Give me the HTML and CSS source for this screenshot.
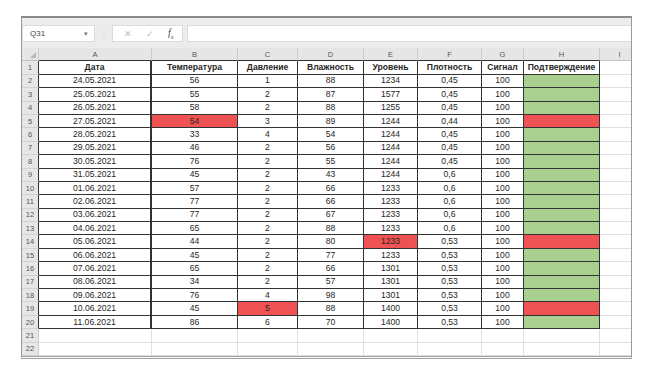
FILE: index.html
```html
<!DOCTYPE html>
<html lang="ru">
<head>
    <meta charset="UTF-8">
    <meta name="viewport" content="width=device-width, initial-scale=1.0">
    <title>Таблица измерений</title>
    <link rel="stylesheet" href="styles.css">
</head>
<body>
    <div class="sheet">
        <div class="top-strip"></div>

        <!-- Строка формул -->
        <div class="formula-bar">
            <div class="name-box">
                <span>Q31</span>
                <span class="name-arrow">▾</span>
            </div>
            <span class="bar-dots">⋮</span>
            <div class="fx-box">
                <span class="fx-cancel">✕</span>
                <span class="fx-ok">✓</span>
                <span class="fx-label">f<sub>x</sub></span>
            </div>
            <div class="formula-input"></div>
        </div>

        <table class="grid">
            <colgroup>
                <col class="w-rn">
                <col class="w-a">
                <col class="w-b">
                <col class="w-c">
                <col class="w-d">
                <col class="w-e">
                <col class="w-f">
                <col class="w-g">
                <col class="w-h">
                <col class="w-i">
            </colgroup>
            <tbody id="grid-body"></tbody>
        </table>
    </div>

    <script>
        // Заголовки столбцов таблицы
        const letters = ['A', 'B', 'C', 'D', 'E', 'F', 'G', 'H', 'I'];
        const titles = ['Дата', 'Температура', 'Давление', 'Влажность', 'Уровень', 'Плотность', 'Сигнал', 'Подтверждение'];

        // Данные: дата, температура, давление, влажность, уровень, плотность, сигнал
        const rows = [
            ['24.05.2021', '56', '1', '88', '1234', '0,45', '100'],
            ['25.05.2021', '55', '2', '87', '1577', '0,45', '100'],
            ['26.05.2021', '58', '2', '88', '1255', '0,45', '100'],
            ['27.05.2021', '54', '3', '89', '1244', '0,44', '100'],
            ['28.05.2021', '33', '4', '54', '1244', '0,45', '100'],
            ['29.05.2021', '46', '2', '56', '1244', '0,45', '100'],
            ['30.05.2021', '76', '2', '55', '1244', '0,45', '100'],
            ['31.05.2021', '45', '2', '43', '1244', '0,6', '100'],
            ['01.06.2021', '57', '2', '66', '1233', '0,6', '100'],
            ['02.06.2021', '77', '2', '66', '1233', '0,6', '100'],
            ['03.06.2021', '77', '2', '67', '1233', '0,6', '100'],
            ['04.06.2021', '65', '2', '88', '1233', '0,6', '100'],
            ['05.06.2021', '44', '2', '80', '1233', '0,53', '100'],
            ['06.06.2021', '45', '2', '77', '1233', '0,53', '100'],
            ['07.06.2021', '65', '2', '66', '1301', '0,53', '100'],
            ['08.06.2021', '34', '2', '57', '1301', '0,53', '100'],
            ['09.06.2021', '76', '4', '98', '1301', '0,53', '100'],
            ['10.06.2021', '45', '5', '88', '1400', '0,53', '100'],
            ['11.06.2021', '86', '6', '70', '1400', '0,53', '100']
        ];

        // Ячейки с отклонением (номер строки листа -> индекс столбца)
        const alerts = { 5: 1, 14: 4, 19: 2 };

        const body = document.getElementById('grid-body');
        let html = '<tr class="col-head"><th class="corner"><span class="corner-mark"></span></th>';
        letters.forEach((l, i) => {
            html += `<th class="${i < 8 ? 'in-table' : ''}">${l}</th>`;
        });
        html += '</tr>';

        html += '<tr><td class="rn rn-table">1</td>';
        titles.forEach(t => {
            html += `<td class="cell title">${t}</td>`;
        });
        html += '<td></td></tr>';

        rows.forEach((row, i) => {
            const n = i + 2;
            html += `<tr><td class="rn rn-table">${n}</td>`;
            row.forEach((v, j) => {
                const bad = alerts[n] === j ? ' bad' : '';
                html += `<td class="cell${bad}">${v}</td>`;
            });
            html += `<td class="cell ${alerts[n] !== undefined ? 'bad' : 'good'}"></td><td></td></tr>`;
        });

        // Пустые строки под таблицей (последняя обрезана рамкой)
        for (let n = 21; n <= 23; n++) {
            html += `<tr><td class="rn">${n < 23 ? n : ''}</td>`;
            for (let j = 0; j < 9; j++) html += '<td></td>';
            html += '</tr>';
        }
        body.innerHTML = html;
    </script>
</body>
</html>
```

FILE: styles.css
```css
body {
    margin: 0;
    background-color: #fff;
    font-family: "Liberation Sans", Arial, sans-serif;
}

.sheet {
    box-sizing: border-box;
    width: 611px;
    height: 343px;
    margin: 16px 0 0 21px;
    border: 1px solid #9a9a9a;
    border-top: 2px solid #8a8a8a;
    border-bottom: 3px double #a0a0a0;
    background-color: #fff;
    overflow: hidden;
}

.top-strip {
    height: 7px;
    background-color: #ececec;
}

/* Строка формул */
.formula-bar {
    display: flex;
    align-items: stretch;
    height: 17px;
    padding-bottom: 6px;
    background-color: #ececec;
    font-size: 8px;
    color: #555;
}

.name-box {
    box-sizing: border-box;
    width: 73px;
    display: flex;
    align-items: center;
    justify-content: space-between;
    padding: 0 6px 0 7px;
    background-color: #fff;
    border: 1px solid #dcdcdc;
    color: #444;
}

.name-arrow {
    font-size: 7px;
    color: #777;
}

.bar-dots {
    width: 17px;
    display: flex;
    align-items: center;
    justify-content: center;
    color: #c4c4c4;
}

.fx-box {
    box-sizing: border-box;
    width: 71px;
    display: flex;
    align-items: center;
    gap: 14px;
    padding-left: 11px;
    background-color: #fff;
    border: 1px solid #dcdcdc;
}

.fx-cancel,
.fx-ok {
    color: #bdbdbd;
    font-size: 9px;
}

.fx-label {
    font-family: "Liberation Serif", serif;
    font-style: italic;
    font-size: 10px;
    color: #444;
}

.fx-label sub {
    font-size: 6px;
}

.formula-input {
    flex: 1;
    margin-left: 4px;
    background-color: #fff;
    border: 1px solid #dcdcdc;
    border-right: none;
}

/* Сетка листа */
.grid {
    table-layout: fixed;
    width: 618px;
    border-collapse: separate;
    border-spacing: 0;
    font-size: 8.6px;
    color: #262626;
}

.w-rn { width: 17px; }
.w-a { width: 113px; }
.w-b { width: 86px; }
.w-c { width: 60px; }
.w-d { width: 66px; }
.w-e { width: 54px; }
.w-f { width: 64px; }
.w-g { width: 42px; }
.w-h { width: 76px; }
.w-i { width: 40px; }

.grid tr {
    height: 13.4px;
}

.grid td,
.grid th {
    padding: 0;
    line-height: 11px;
    text-align: center;
    white-space: nowrap;
    overflow: hidden;
    border-right: 1px solid #e0e0e0;
    border-bottom: 1px solid #e0e0e0;
}

.col-head th {
    background-color: #e6e6e6;
    font-weight: normal;
    font-size: 7.5px;
    color: #555;
    border-right: 1px solid #cbcbcb;
    border-bottom: 1px solid #c4c4c4;
}

.col-head th.in-table {
    border-bottom: 1px solid #333;
}

.col-head th.corner {
    text-align: right;
    vertical-align: bottom;
    line-height: 0;
}

.corner-mark {
    display: inline-block;
    margin: 0 2px 2px 0;
    border-left: 6px solid transparent;
    border-bottom: 6px solid #b8b8b8;
}

.grid td.rn {
    background-color: #e6e6e6;
    font-size: 7.5px;
    color: #555;
    border-right: 1px solid #cbcbcb;
    border-bottom: 1px solid #d2d2d2;
}

.grid td.rn-table {
    border-right: 1px solid #333;
}

.grid td.cell {
    border-right: 1px solid #333;
    border-bottom: 1px solid #333;
}

.grid td.cell:nth-child(2) {
    border-right-width: 2px;
}

.grid td.title {
    font-weight: bold;
}

.grid td.bad {
    background-color: #ef5252;
}

.grid td.good {
    background-color: #a9d08e;
}
```
